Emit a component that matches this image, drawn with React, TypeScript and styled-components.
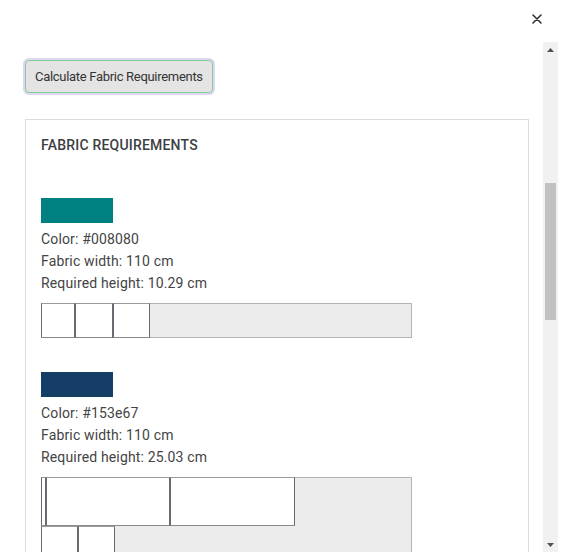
import React, { useLayoutEffect, useRef, useState } from "react";
import styled, { createGlobalStyle } from "styled-components";

const GlobalStyle = createGlobalStyle`
  html, body {
    margin: 0;
    padding: 0;
    height: 100%;
    overflow: hidden;
    background: #ffffff;
  }
  #root { height: 100%; }
  * { box-sizing: border-box; }
  body {
    font-family: Roboto, "Liberation Sans", Arial, sans-serif;
    color: #444;
  }
`;

const PX_PER_CM = 371 / 110;

type Piece = { x: number; y: number; w: number; h: number };
type Requirement = {
  color: string;
  width: number;
  height: number;
  pieces: Piece[];
};

const requirements: Requirement[] = [
  {
    color: "#008080",
    width: 110,
    height: 10.29,
    pieces: [
      { x: 0, y: 0, w: 10.17, h: 10.29 },
      { x: 10.17, y: 0, w: 11.09, h: 10.29 },
      { x: 21.26, y: 0, w: 11.14, h: 10.29 },
    ],
  },
  {
    color: "#153e67",
    width: 110,
    height: 25.03,
    pieces: [
      { x: 0, y: 0, w: 1.5, h: 14.53 },
      { x: 1.5, y: 0, w: 36.75, h: 14.53 },
      { x: 38.25, y: 0, w: 37.05, h: 14.53 },
      { x: 0, y: 14.53, w: 10.9, h: 10.5 },
      { x: 10.9, y: 14.53, w: 11.0, h: 10.5 },
    ],
  },
  {
    color: "#c0392b",
    width: 110,
    height: 15.21,
    pieces: [
      { x: 0, y: 0, w: 20.4, h: 15.21 },
      { x: 20.4, y: 0, w: 20.4, h: 15.21 },
      { x: 40.8, y: 0, w: 10.8, h: 10.29 },
    ],
  },
  {
    color: "#f2c14e",
    width: 110,
    height: 10.29,
    pieces: [
      { x: 0, y: 0, w: 10.8, h: 10.29 },
      { x: 10.8, y: 0, w: 10.8, h: 10.29 },
    ],
  },
  {
    color: "#6b4f9e",
    width: 110,
    height: 25.0,
    pieces: [
      { x: 0, y: 0, w: 36.8, h: 14.5 },
      { x: 36.8, y: 0, w: 36.8, h: 14.5 },
      { x: 0, y: 14.5, w: 10.8, h: 10.5 },
    ],
  },
  {
    color: "#e8e1d0",
    width: 110,
    height: 10.29,
    pieces: [
      { x: 0, y: 0, w: 10.8, h: 10.29 },
      { x: 10.8, y: 0, w: 10.8, h: 10.29 },
      { x: 21.6, y: 0, w: 10.8, h: 10.29 },
      { x: 32.4, y: 0, w: 10.8, h: 10.29 },
    ],
  },
];

const previewColors = ["#008080", "#153e67", "#c0392b", "#f2c14e", "#6b4f9e", "#e8e1d0"];

const Page = styled.div`
  height: 100vh;
  display: flex;
  flex-direction: column;
`;

const Header = styled.header`
  flex: none;
  height: 42px;
  display: flex;
  justify-content: flex-end;
  align-items: flex-start;
  padding: 7px 22px 0 0;
`;

const CloseButton = styled.button`
  width: 24px;
  height: 24px;
  padding: 0;
  border: none;
  background: transparent;
  display: flex;
  align-items: center;
  justify-content: center;
  cursor: pointer;
  color: #333;
`;

const BodyRow = styled.div`
  flex: 1;
  min-height: 0;
  display: flex;
  margin: 0 13px 0 10px;
`;

const ScrollBody = styled.div`
  flex: 1;
  min-width: 0;
  overflow-y: scroll;
  scrollbar-width: none;
  padding: 18px 14px 20px 15px;
  &::-webkit-scrollbar {
    display: none;
  }
`;

const ScrollTrack = styled.div`
  flex: none;
  width: 15px;
  display: flex;
  flex-direction: column;
  background: #f1f1f1;
`;

const ScrollArrow = styled.div`
  flex: none;
  height: 15px;
  display: flex;
  align-items: center;
  justify-content: center;
`;

const ThumbArea = styled.div`
  flex: 1;
  position: relative;
`;

const Thumb = styled.div`
  position: absolute;
  left: 2px;
  right: 2px;
  background: #c1c1c1;
`;

const PreviewSection = styled.section`
  height: 451px;
  margin-bottom: 18px;
  display: flex;
  flex-direction: column;
  gap: 12px;
`;

const SectionTitle = styled.h3`
  margin: 0;
  font-size: 14px;
  line-height: 20px;
  font-weight: 500;
  letter-spacing: 0.2px;
  text-transform: uppercase;
  color: #3c4043;
`;

const PreviewGrid = styled.div`
  flex: 1;
  display: grid;
  grid-template-columns: repeat(6, 1fr);
  gap: 4px;
  border: 1px solid #ddd;
  padding: 8px;
`;

const PreviewBlock = styled.div<{ $color: string }>`
  background: ${(p) => p.$color};
`;

const CalcButton = styled.button`
  display: block;
  font-family: Roboto, "Liberation Sans", Arial, sans-serif;
  font-size: 13px;
  line-height: 15px;
  letter-spacing: -0.3px;
  color: #333;
  background: #e4e4e4;
  border: 1px solid #86cc96;
  border-radius: 4px;
  padding: 8px 9px;
  box-shadow: 0 0 0 2px #dcd7f3;
  cursor: pointer;
  margin-bottom: 26px;
`;

const Card = styled.section`
  border: 1px solid #dcdcdc;
  padding: 15px 15px 16px;
`;

const CardTitle = styled(SectionTitle)`
  margin-bottom: 43px;
`;

const EntryList = styled.div`
  display: flex;
  flex-direction: column;
  gap: 34px;
`;

const Entry = styled.div`
  display: flex;
  flex-direction: column;
  align-items: flex-start;
`;

const Swatch = styled.div<{ $color: string }>`
  width: 72px;
  height: 25px;
  background: ${(p) => p.$color};
  margin-bottom: 5px;
`;

const InfoLine = styled.div`
  font-size: 14px;
  line-height: 22px;
  letter-spacing: 0.15px;
  color: #444;
`;

const LayoutCanvas = styled.div`
  position: relative;
  margin-top: 9px;
  background: #ececec;
  box-shadow: inset 0 0 0 1px #b4b4b4;
  overflow: hidden;
`;

const PieceBox = styled.div`
  position: absolute;
  background: #fff;
  border: 1px solid #6a6a72;
  border-top-color: #9a9a9a;
  border-bottom-color: #8a8a8e;
`;

const CloseIcon = () => (
  <svg width="10" height="10" viewBox="0 0 10 10" aria-hidden="true">
    <path d="M1 1 L9 9 M9 1 L1 9" stroke="#333" strokeWidth="1.6" strokeLinecap="round" />
  </svg>
);

const ArrowIcon = ({ down }: { down?: boolean }) => (
  <svg width="7" height="4" viewBox="0 0 7 4" aria-hidden="true">
    <path d={down ? "M0 0 L7 0 L3.5 4 Z" : "M0 4 L7 4 L3.5 0 Z"} fill="#505050" />
  </svg>
);

const RequirementEntry = ({ req }: { req: Requirement }) => (
  <Entry>
    <Swatch $color={req.color} />
    <InfoLine>Color: {req.color}</InfoLine>
    <InfoLine>Fabric width: {req.width} cm</InfoLine>
    <InfoLine>Required height: {req.height.toFixed(2)} cm</InfoLine>
    <LayoutCanvas
      style={{ width: req.width * PX_PER_CM, height: req.height * PX_PER_CM }}
    >
      {req.pieces.map((p, i) => (
        <PieceBox
          key={i}
          style={{
            left: p.x * PX_PER_CM,
            top: p.y * PX_PER_CM,
            width: p.w * PX_PER_CM,
            height: p.h * PX_PER_CM,
          }}
        />
      ))}
    </LayoutCanvas>
  </Entry>
);

export default function App() {
  const scrollRef = useRef<HTMLDivElement>(null);
  const areaRef = useRef<HTMLDivElement>(null);
  const [thumb, setThumb] = useState({ top: 0, height: 0 });

  const updateThumb = () => {
    const el = scrollRef.current;
    const area = areaRef.current;
    if (!el || !area) return;
    const trackH = area.clientHeight;
    const height = Math.max(20, (trackH * el.clientHeight) / el.scrollHeight);
    const top = (trackH * el.scrollTop) / el.scrollHeight;
    setThumb({ top, height });
  };

  useLayoutEffect(() => {
    if (scrollRef.current) scrollRef.current.scrollTop = 469;
    updateThumb();
  }, []);

  return (
    <>
      <GlobalStyle />
      <Page>
        <Header>
          <CloseButton aria-label="Close">
            <CloseIcon />
          </CloseButton>
        </Header>
        <BodyRow>
          <ScrollBody ref={scrollRef} onScroll={updateThumb}>
            <PreviewSection>
              <SectionTitle>Quilt Preview</SectionTitle>
              <PreviewGrid>
                {Array.from({ length: 36 }).map((_, i) => (
                  <PreviewBlock key={i} $color={previewColors[(i * 7 + Math.floor(i / 6)) % 6]} />
                ))}
              </PreviewGrid>
            </PreviewSection>
            <CalcButton>Calculate Fabric Requirements</CalcButton>
            <Card>
              <CardTitle>Fabric Requirements</CardTitle>
              <EntryList>
                {requirements.map((req) => (
                  <RequirementEntry key={req.color} req={req} />
                ))}
              </EntryList>
            </Card>
          </ScrollBody>
          <ScrollTrack>
            <ScrollArrow>
              <ArrowIcon />
            </ScrollArrow>
            <ThumbArea ref={areaRef}>
              <Thumb style={{ top: thumb.top, height: thumb.height }} />
            </ThumbArea>
            <ScrollArrow>
              <ArrowIcon down />
            </ScrollArrow>
          </ScrollTrack>
        </BodyRow>
      </Page>
    </>
  );
}
